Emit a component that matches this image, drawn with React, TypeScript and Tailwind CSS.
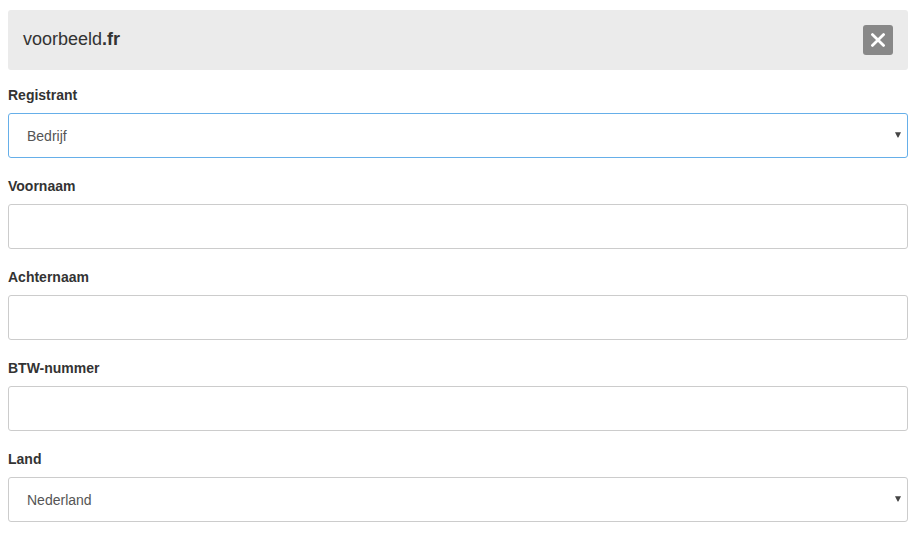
import { useId } from "react"
import type { ReactNode } from "react"

const labelClass = "mb-2 block text-sm leading-5 font-bold text-[#333]"
const controlClass =
  "block h-[45px] w-full appearance-none rounded-[3px] border bg-white px-[18px] text-sm text-[#555] outline-none focus:border-[#66afe9]"

function TextField({ label }: { label: string }) {
  const id = useId()

  return (
    <div>
      <label htmlFor={id} className={labelClass}>
        {label}
      </label>
      <input id={id} type="text" className={`${controlClass} border-[#ccc]`} />
    </div>
  )
}

function SelectField({ label, active, children }: { label: string; active?: boolean; children: ReactNode }) {
  const id = useId()

  return (
    <div>
      <label htmlFor={id} className={labelClass}>
        {label}
      </label>
      <div className="relative">
        <select id={id} className={`${controlClass} ${active ? "border-[#66afe9]" : "border-[#ccc]"}`}>
          {children}
        </select>
        <svg
          viewBox="0 0 6 6"
          className="pointer-events-none absolute top-[19px] right-[7px] h-1.5 w-1.5 fill-[#444]"
          aria-hidden="true"
        >
          <path d="M0 .3h6L3.4 5.6h-.8z" />
        </svg>
      </div>
    </div>
  )
}

export default function App() {
  return (
    <main className="pt-2.5 pr-3.5 pb-3 pl-2 font-['Liberation_Sans',Arial,sans-serif]">
      {/* Domain header */}
      <header className="mb-[15px] flex items-start justify-between rounded-[3px] bg-[#ebebeb] p-[15px]">
        <h1 className="text-lg leading-7 text-[#333]">
          voorbeeld<strong className="font-bold">.fr</strong>
        </h1>
        <button
          type="button"
          aria-label="Verwijderen"
          className="flex h-[30px] w-[30px] items-center justify-center rounded-[3px] bg-[#888] text-white"
        >
          <svg viewBox="0 0 14 14" className="h-3.5 w-3.5" fill="none" stroke="currentColor" strokeWidth="2.8" strokeLinecap="round" aria-hidden="true">
            <path d="M1.4 1.6l11.2 10.8M12.6 1.6L1.4 12.4" />
          </svg>
        </button>
      </header>

      {/* Contact details */}
      <form className="space-y-[18px]">
        <SelectField label="Registrant" active>
          <option>Bedrijf</option>
          <option>Particulier</option>
        </SelectField>
        <TextField label="Voornaam" />
        <TextField label="Achternaam" />
        <TextField label="BTW-nummer" />
        <SelectField label="Land">
          <option>Nederland</option>
          <option>België</option>
          <option>Frankrijk</option>
        </SelectField>
      </form>
    </main>
  )
}
